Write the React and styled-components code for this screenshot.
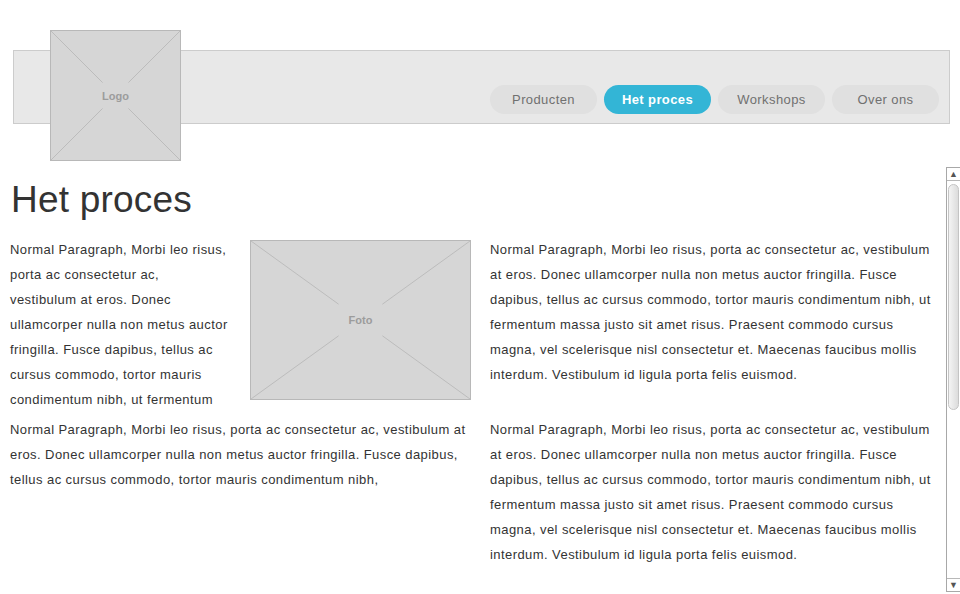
import React from "react";
import styled, { createGlobalStyle } from "styled-components";

const GlobalStyle = createGlobalStyle`
	html, body {
		margin: 0;
		padding: 0;
		background: #ffffff;
	}
	body {
		font-family: "Liberation Sans", Arial, Helvetica, sans-serif;
		color: #333333;
	}
`;

// styles
const Page = styled.div`
	width: 960px;
	height: 594px;
	overflow: hidden;
`;

const Masthead = styled.header`
	position: relative;
	padding: 50px 10px 0 13px;
	height: 110px;
`;

const Bar = styled.div`
	box-sizing: border-box;
	height: 74px;
	background: #e8e8e8;
	border: 1px solid #cccccc;
	display: flex;
	justify-content: flex-end;
	align-items: flex-end;
	gap: 7px;
	padding: 0 10px 9px 0;
`;

const LogoSpot = styled.div`
	position: absolute;
	top: 30px;
	left: 50px;
`;

const Pill = styled.a`
	box-sizing: border-box;
	width: 107px;
	height: 29px;
	border-radius: 15px;
	display: flex;
	align-items: center;
	justify-content: center;
	font-size: 13px;
	letter-spacing: 0.4px;
	text-decoration: none;
	cursor: pointer;
	background: ${(p) => (p.$active ? "#33b5d6" : "#e0e0e0")};
	color: ${(p) => (p.$active ? "#ffffff" : "#707070")};
	font-weight: ${(p) => (p.$active ? 700 : 400)};
`;

const Body = styled.div`
	display: flex;
	align-items: flex-start;
`;

const Content = styled.main`
	flex: 1;
	padding-left: 10px;
`;

const Title = styled.h1`
	margin: 18px 0 15px 1px;
	font-size: 37px;
	line-height: 44px;
	font-weight: 400;
	letter-spacing: 0.2px;
	color: #333333;
`;

const Columns = styled.div`
	display: grid;
	grid-template-columns: 460px 450px;
	grid-template-rows: 180px auto;
	column-gap: 20px;
`;

const Text = styled.p`
	margin: 0;
	font-size: 13px;
	line-height: 25px;
	letter-spacing: 0.43px;
	color: #333333;
`;

const MediaRow = styled.div`
	display: flex;
	align-items: flex-start;
	gap: 8px;
`;

const SideText = styled(Text)`
	width: 232px;
	flex: none;
`;

const Box = styled.div`
	position: relative;
	box-sizing: border-box;
	width: ${(p) => p.$w}px;
	height: ${(p) => p.$h}px;
	margin-top: ${(p) => p.$top || 0}px;
	flex: none;
	background: #d6d6d6;
	border: 1px solid #b8b8b8;
	display: flex;
	align-items: center;
	justify-content: center;
`;

const Cross = styled.svg`
	position: absolute;
	inset: 0;
	width: 100%;
	height: 100%;
`;

const BoxLabel = styled.span`
	position: relative;
	font-size: 11px;
	font-weight: 700;
	color: #9c9c9c;
`;

const Scrollbar = styled.div`
	box-sizing: border-box;
	width: 14px;
	height: 425px;
	margin-top: 7px;
	flex: none;
	border: 1px solid #a8a8a8;
	border-right: none;
	background: #ffffff;
	display: flex;
	flex-direction: column;
`;

const Arrow = styled.div`
	height: 12px;
	flex: none;
	display: flex;
	align-items: center;
	justify-content: center;
	border-bottom: ${(p) => (p.$down ? "none" : "1px solid #b8b8b8")};
	border-top: ${(p) => (p.$down ? "1px solid #b8b8b8" : "none")};
	font-size: 9px;
	color: #555555;
`;

const Track = styled.div`
	flex: 1;
	padding: 3px 1px 0;
`;

const Thumb = styled.div`
	height: 224px;
	border: 1px solid #c4c4c4;
	border-radius: 6px;
	background: linear-gradient(to right, #f4f4f4, #dcdcdc);
`;

function Placeholder({ label, w, h, top }) {
	return (
		<Box $w={w} $h={h} $top={top}>
			<Cross viewBox="0 0 100 100" preserveAspectRatio="none">
				<g stroke="#bcbcbc" strokeWidth="1">
					<line x1="0" y1="0" x2="40" y2="40" vectorEffect="non-scaling-stroke" />
					<line x1="100" y1="0" x2="60" y2="40" vectorEffect="non-scaling-stroke" />
					<line x1="0" y1="100" x2="40" y2="60" vectorEffect="non-scaling-stroke" />
					<line x1="100" y1="100" x2="60" y2="60" vectorEffect="non-scaling-stroke" />
				</g>
			</Cross>
			<BoxLabel>{label}</BoxLabel>
		</Box>
	);
}

const nav = ["Producten", "Het proces", "Workshops", "Over ons"];

const sideLines = [
	"Normal Paragraph, Morbi leo risus,",
	"porta ac consectetur ac,",
	"vestibulum at eros. Donec",
	"ullamcorper nulla non metus auctor",
	"fringilla. Fusce dapibus, tellus ac",
	"cursus commodo, tortor mauris",
	"condimentum nibh, ut fermentum",
];

const long =
	"Normal Paragraph, Morbi leo risus, porta ac consectetur ac, vestibulum at eros. Donec ullamcorper nulla non metus auctor fringilla. Fusce dapibus, tellus ac cursus commodo, tortor mauris condimentum nibh, ut fermentum massa justo sit amet risus. Praesent commodo cursus magna, vel scelerisque nisl consectetur et. Maecenas faucibus mollis interdum. Vestibulum id ligula porta felis euismod.";

export default function App() {
	return (
		<Page>
			<GlobalStyle />
			<Masthead>
				<Bar>
					{nav.map((item) => (
						<Pill key={item} $active={item === "Het proces"}>
							{item}
						</Pill>
					))}
				</Bar>
				<LogoSpot>
					<Placeholder label="Logo" w={131} h={131} />
				</LogoSpot>
			</Masthead>

			<Body>
				<Content>
					<Title>Het proces</Title>
					<Columns>
						<MediaRow>
							<SideText>
								{sideLines.map((line, i) => (
									<React.Fragment key={i}>
										{line}
										{i < sideLines.length - 1 && <br />}
									</React.Fragment>
								))}
							</SideText>
							<Placeholder label="Foto" w={221} h={160} top={3} />
						</MediaRow>
						<Text>{long}</Text>
						<Text>
							Normal Paragraph, Morbi leo risus, porta ac consectetur ac, vestibulum
							at eros. Donec ullamcorper nulla non metus auctor fringilla. Fusce
							dapibus, tellus ac cursus commodo, tortor mauris condimentum nibh,
						</Text>
						<Text>{long}</Text>
					</Columns>
				</Content>

				<Scrollbar>
					<Arrow>▲</Arrow>
					<Track>
						<Thumb />
					</Track>
					<Arrow $down>▼</Arrow>
				</Scrollbar>
			</Body>
		</Page>
	);
}
